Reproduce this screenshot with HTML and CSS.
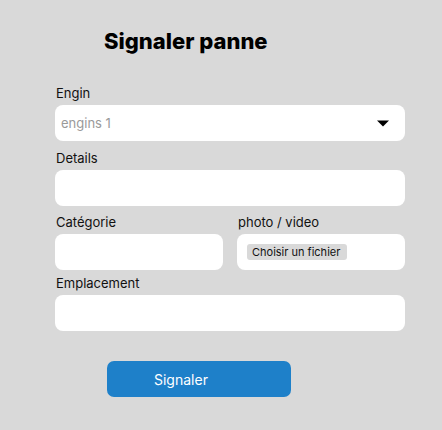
FILE: index.html
```html
<!DOCTYPE html>
<html lang="fr">
<head>
<meta charset="utf-8">
<title>Signaler panne</title>
<link rel="stylesheet" href="styles.css">
</head>
<body>
<main class="page">
  <h1 class="title">Signaler panne</h1>
  <form class="form">
    <div class="field field-engin">
      <label class="label">Engin</label>
      <div class="box select">
        <span class="placeholder">engins 1</span>
        <svg class="arrow" width="12" height="7" viewBox="0 0 12 7"><path d="M0 0.5H12L6 6.5Z" fill="#000"/></svg>
      </div>
    </div>
    <div class="field field-details">
      <label class="label">Details</label>
      <div class="box"></div>
    </div>
    <div class="row">
      <div class="field">
        <label class="label">Catégorie</label>
        <div class="box"></div>
      </div>
      <div class="field">
        <label class="label">photo / video</label>
        <div class="box file">
          <span class="file-btn">Choisir un fichier</span>
        </div>
      </div>
    </div>
    <div class="field field-place">
      <label class="label">Emplacement</label>
      <div class="box"></div>
    </div>
    <button type="button" class="submit">Signaler</button>
  </form>
</main>
</body>
</html>
```
FILE: styles.css
```css
* { box-sizing: border-box; }
html, body {
  margin: 0;
  background: #d9d9d9;
}
body {
  font-family: Inter, "Noto Sans", sans-serif;
  color: #111;
  width: 442px;
  height: 430px;
  overflow: hidden;
}
.page {
  padding: 28px 37px 0 55px;
}
.title {
  margin: 0 0 0 49px;
  font-size: 22px;
  line-height: 26px;
  font-weight: 800;
  color: #000;
}
.form {
  display: flex;
  flex-direction: column;
}
.field {
  display: flex;
  flex-direction: column;
}
.field-engin { margin-top: 31px; }
.field-details { margin-top: 9px; }
.row {
  margin-top: 8px;
  display: grid;
  grid-template-columns: 168px 168px;
  column-gap: 14px;
}
.field-place { margin-top: 5px; }
.label {
  font-size: 13px;
  line-height: 16px;
  margin: 0 0 4px 1px;
  color: #111;
}
.box {
  height: 36px;
  background: #fff;
  border-radius: 8px;
}
.select {
  display: flex;
  align-items: center;
  justify-content: space-between;
  padding: 0 16px 0 6px;
}
.placeholder {
  font-size: 13px;
  color: #9a9a9a;
}
.arrow { display: block; margin-top: 1px; }
.file {
  display: flex;
  align-items: center;
  padding-left: 10px;
}
.file-btn {
  font-size: 11px;
  line-height: 16px;
  height: 16px;
  padding: 0 5px;
  width: 100px;
  background: #d9d9d9;
  border-radius: 3px;
  color: #111;
}
.submit {
  margin: 30px 0 0 52px;
  width: 184px;
  height: 36px;
  border: 0;
  border-radius: 7px;
  background: #1e80c9;
  color: #fff;
  font-family: Inter, "Noto Sans", sans-serif;
  font-size: 14px;
  text-align: left;
  padding-left: 47px;
}
```
